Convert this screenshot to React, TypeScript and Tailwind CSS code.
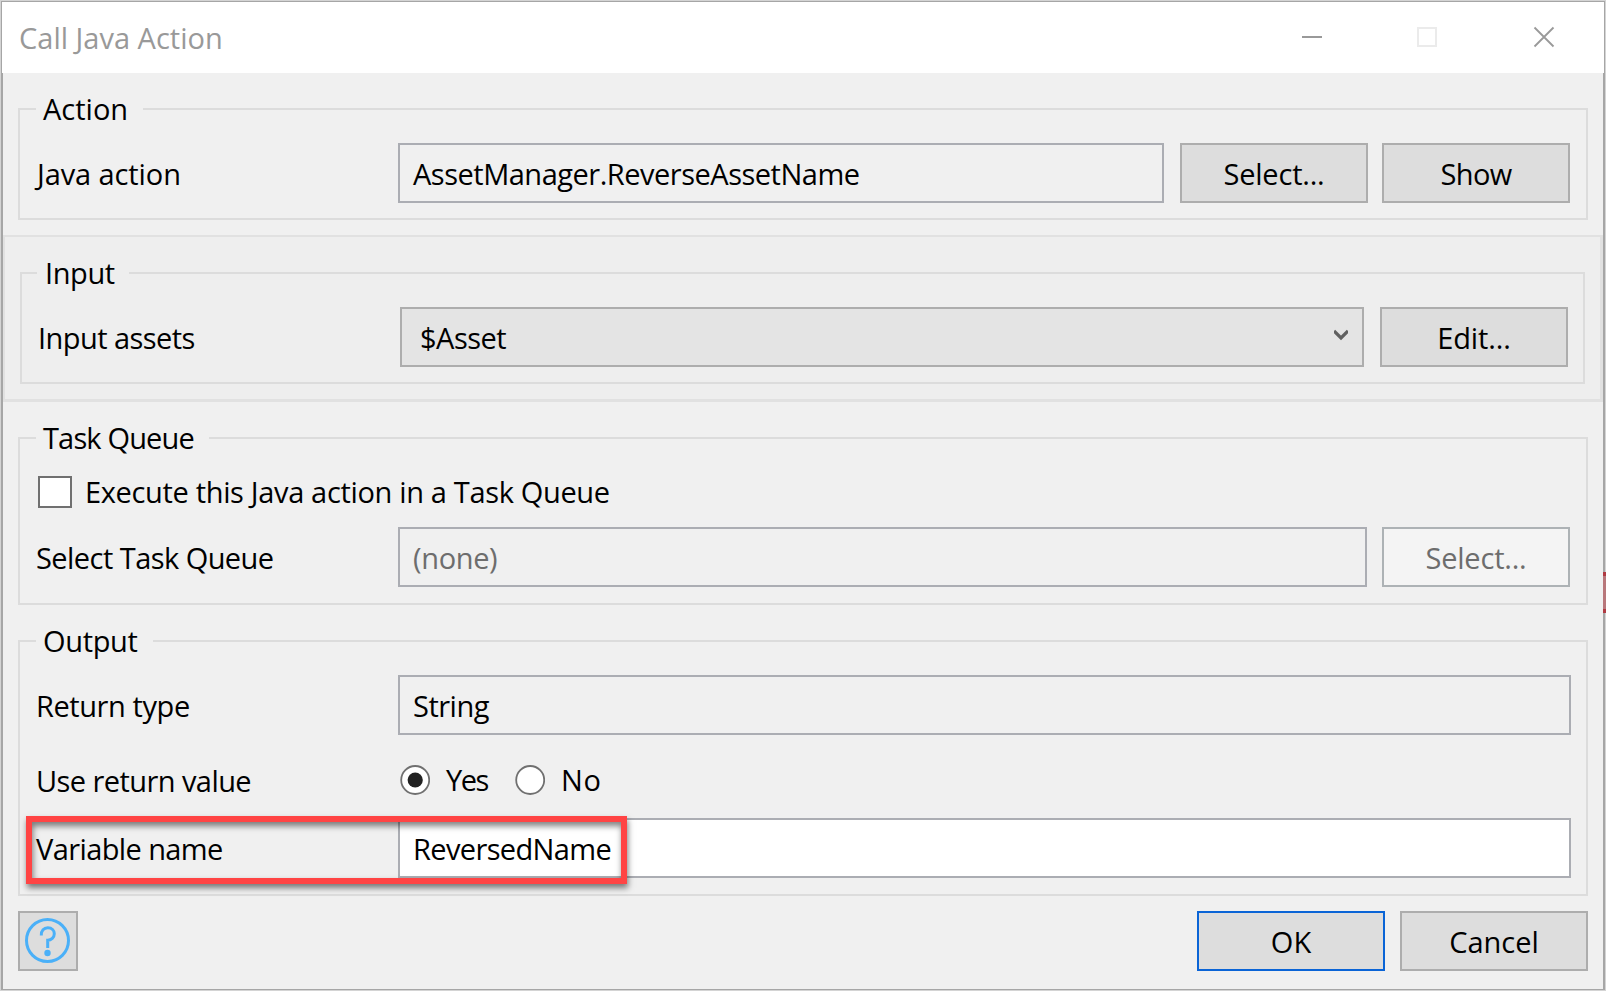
import type { ReactNode } from "react";

function Group({ title, legend, className, children }: { title: string; legend: string; className: string; children: ReactNode }) {
  return (
    <fieldset className={`mx-[15px] flex min-w-0 flex-col border-2 border-[#dcdcdc] ${className}`}>
      <legend className={`h-10 whitespace-nowrap ${legend}`}>{title}</legend>
      {children}
    </fieldset>
  );
}

function Label({ children, className = "" }: { children: ReactNode; className?: string }) {
  return <div className={`w-[362px] shrink-0 whitespace-nowrap pt-0.5 ${className}`}>{children}</div>;
}

function Field({ children, className = "" }: { children: ReactNode; className?: string }) {
  return (
    <div className={`flex h-[60px] min-w-0 flex-1 items-center border-2 border-[#abadb3] pl-[13px] pt-0.5 ${className}`}>
      {children}
    </div>
  );
}

function Button({ children, className = "border-[#adadad] bg-[#dddddd]" }: { children: ReactNode; className?: string }) {
  return (
    <button className={`flex h-[60px] w-[188px] shrink-0 items-center justify-center border-2 pt-0.5 ${className}`}>
      {children}
    </button>
  );
}

function Radio({ checked = false }: { checked?: boolean }) {
  return (
    <svg width="30" height="30" viewBox="0 0 30 30">
      <circle cx="15.200" cy="15" r="14" fill="#fff" stroke="#707070" strokeWidth="1.8" />
      {checked && <circle cx="15.200" cy="15" r="7.6" fill="#222" />}
    </svg>
  );
}

export default function App() {
  return (
    <div className="relative flex h-[991px] w-[1606px] flex-col border border-[#d4d4d4] bg-[#f0f0f0] font-['Open_Sans','Noto_Sans',sans-serif] text-[29px] leading-10 text-black">
      <div className="flex flex-1 flex-col border border-[#a6a6a6]">
        <header className="flex h-[71px] shrink-0 items-center justify-between bg-white pl-[17px] text-[#999]">
          <span className="pt-px">Call Java Action</span>
          <svg width="302" height="71" viewBox="0 0 302 71" fill="none">
            <path d="M0 35H20" stroke="#999" strokeWidth="2" />
            <rect x="116" y="26" width="18" height="18" stroke="#ebebeb" strokeWidth="2" />
            <path d="M232.500 25.500L251.500 44.500M251.500 25.500L232.500 44.500" stroke="#999" strokeWidth="1.800" />
          </svg>
        </header>
        <main className="flex flex-1 flex-col border-x border-[#a6a6a6] pt-4">
          <Group title="Action" legend="ml-4 w-[107px] pl-[7px]" className="pb-[15px]">
            <div className="flex items-center pl-4 pr-4 pt-[14px]">
              <Label className="pl-px tracking-[-0.1px]">Java action</Label>
              <Field className="tracking-[-0.49px]">AssetManager.ReverseAssetName</Field>
              <div className="ml-4 flex gap-[14px]">
                <Button className="border-[#adadad] bg-[#dddddd] tracking-[-0.2px]">Select...</Button>
                <Button className="border-[#adadad] bg-[#dddddd] tracking-[-0.6px]">Show</Button>
              </div>
            </div>
          </Group>

          <div className="mt-[15px] flex flex-col border-2 border-b-3 border-r-3 border-[#e1e1e1] bg-[#eeeeee] pb-[15px] pt-4">
            <Group title="Input" legend="ml-[15px] w-[92px] pl-2 tracking-[-0.4px]" className="pb-[15px]">
              <div className="flex items-center pl-4 pr-[15px] pt-[14px]">
                <Label className="tracking-[-0.55px]">Input assets</Label>
                <div className="flex h-[60px] flex-1 items-center justify-between border-2 border-[#adadad] bg-[#e4e4e4] pl-[18px] pr-[14px] pt-0.5">
                  <span className="tracking-[-0.5px]">$Asset</span>
                  <svg className="-mt-1.5" width="14" height="12" viewBox="0 0 14 12" fill="none">
                    <path d="M0 2L7 9L14 2" stroke="#606060" strokeWidth="3.200" />
                  </svg>
                </div>
                <div className="ml-4">
                  <Button className="border-[#adadad] bg-[#dddddd] tracking-[-0.1px]">Edit...</Button>
                </div>
              </div>
            </Group>
          </div>

          <Group title="Task Queue" legend="ml-4 w-[173px] pl-[7px] tracking-[-0.85px]" className="mt-4 pb-4">
            <div className="flex h-[50px] items-center pl-4 pt-[18px]">
              <span className="ml-0.5 h-8 w-[34px] border-2 border-[#707070] bg-white" />
              <span className="ml-[13px] leading-8 tracking-[-0.34px]">Execute this Java action in a Task Queue</span>
            </div>
            <div className="mt-[19px] flex items-center px-4">
              <Label className="tracking-[-0.55px]">Select Task Queue</Label>
              <Field className="text-[#6d6d6d] tracking-[-0.35px]">(none)</Field>
              <div className="ml-[15px]">
                <Button className="border-[#adb2b5] bg-[#f4f4f4] text-[#6d6d6d] tracking-[-0.2px]">Select...</Button>
              </div>
            </div>
          </Group>

          <Group title="Output" legend="ml-4 w-[117px] pl-[7px] tracking-[-0.35px]" className="mt-4 pb-4">
            <div className="flex items-center pl-4 pr-[15px] pt-[14px]">
              <Label className="tracking-[-0.42px]">Return type</Label>
              <Field className="tracking-[-0.5px]">String</Field>
            </div>
            <div className="mt-[30px] flex h-[30px] items-center pl-4">
              <Label className="tracking-[-0.57px]">Use return value</Label>
              <div className="ml-0.5 flex w-[115px] items-center gap-4">
                <Radio checked />
                <span className="tracking-[-1.5px]">Yes</span>
              </div>
              <div className="flex items-center gap-4">
                <Radio />
                <span className="tracking-[0.6px]">No</span>
              </div>
            </div>
            <div className="relative mt-[23px] flex items-center pl-4 pr-[15px]">
              <Label className="tracking-[-0.6px]">Variable name</Label>
              <Field className="bg-white tracking-[-0.63px]">ReversedName</Field>
              <div className="absolute -top-0.5 left-1.5 h-[68px] w-[601px] border-6 border-[#ff4444] shadow-[1px_4px_6px_rgba(0,0,0,0.5),inset_1px_4px_6px_rgba(0,0,0,0.5)]" />
            </div>
          </Group>

          <footer className="mx-[15px] mt-[15px] flex">
            <button className="flex size-[60px] items-center justify-center border-2 border-[#adadad] bg-[#dddddd]">
              <svg width="46" height="46" viewBox="0 0 46 46" fill="none" stroke="#4ab0f8">
                <circle cx="22.500" cy="22.500" r="21" strokeWidth="3" />
                <path d="M16.300 17.500C16 12.500 19 9.700 22.800 9.700C26.800 9.700 29.300 12.400 29.300 15.800C29.300 19.500 26.200 22.300 22.700 22.300V30" strokeWidth="3" />
                <circle cx="22.500" cy="35" r="3.200" fill="#4ab0f8" stroke="none" />
              </svg>
            </button>
            <div className="ml-auto flex gap-[15px]">
              <Button className="border-[#0a64d6] bg-[#dddddd]">OK</Button>
              <Button>Cancel</Button>
            </div>
          </footer>
        </main>
      </div>
      <div className="absolute -right-px top-[571px] h-[41px] w-[3px] border-y-4 border-[#b03a42] bg-[#b8777b]" />
    </div>
  );
}
